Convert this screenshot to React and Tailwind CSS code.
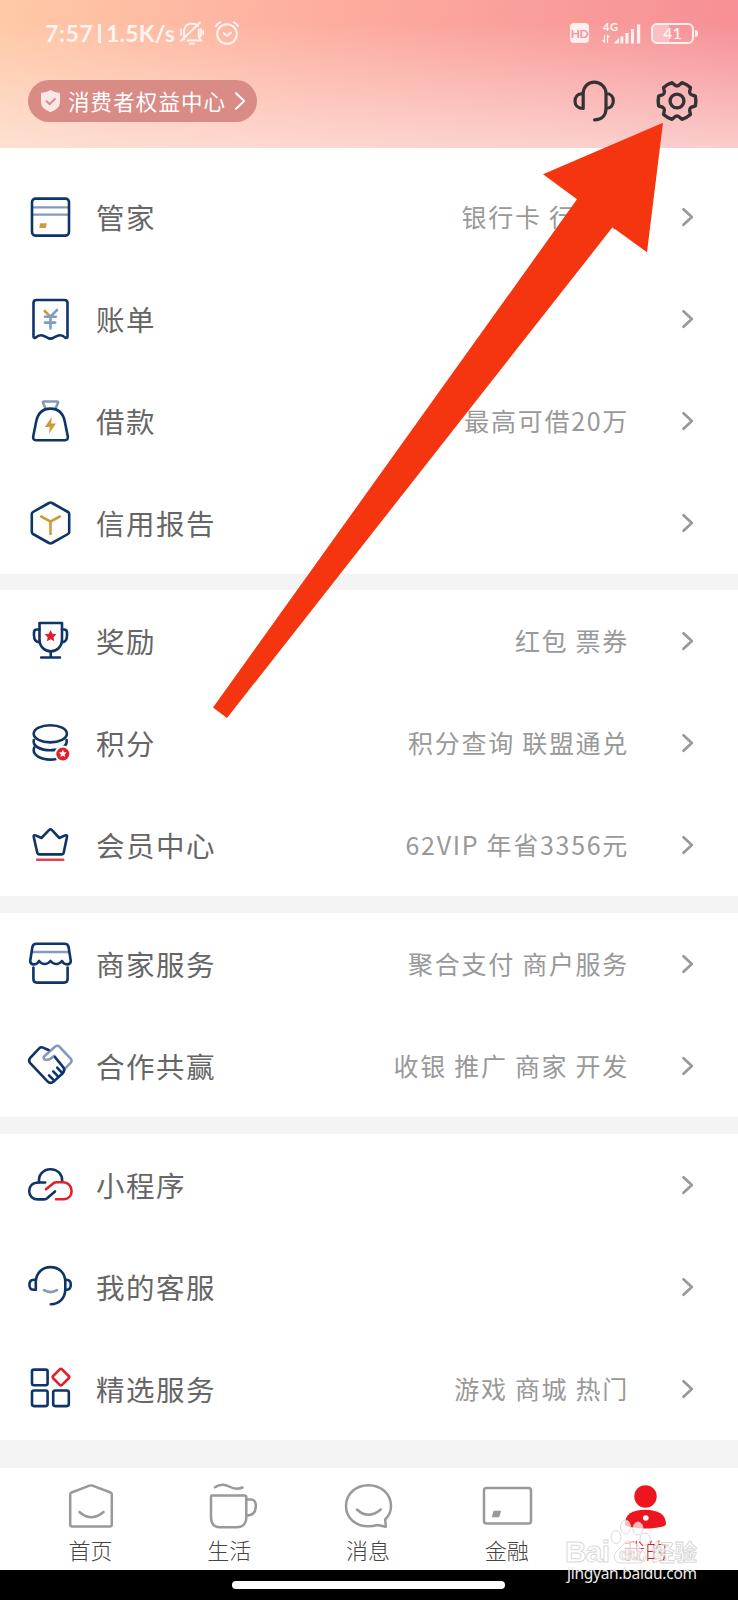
import React from "react";

const NAVY = "#0f3468";
const STEEL = "#8599bb";
const GOLD = "#cf9a3a";
const RED = "#e0202a";

function star(cx, cy, r) {
  return Array.from({ length: 10 }, (_, i) => {
    const rad = i % 2 ? r * 0.5 : r;
    const a = (Math.PI / 5) * i - Math.PI / 2;
    return `${(cx + rad * Math.cos(a)).toFixed(2)},${(cy + rad * Math.sin(a)).toFixed(2)}`;
  }).join(" ");
}

function gearPath() {
  const p = (r, deg) => {
    const a = (deg * Math.PI) / 180;
    return `${(r * Math.cos(a)).toFixed(2)} ${(r * Math.sin(a)).toFixed(2)}`;
  };
  let d = "";
  for (let k = 0; k < 6; k++) {
    const b = k * 60;
    d += `${k ? "L" : "M"}${p(19, b - 15)} Q${p(19.4, b)} ${p(19, b + 15)} L${p(17.4, b + 18.5)} Q${p(13, b + 30)} ${p(17.4, b + 41.5)} `;
  }
  return d + "Z";
}

const icons = {
  card: (
    <>
      <path d="M-18 -9.7H19M-18 -2.3H19" stroke={STEEL} strokeWidth="2.2" />
      <rect x="-18" y="-18.4" width="37" height="37" rx="3.5" />
      <path d="M-9.8 6.2H-3.2L-4.2 11H-10.8Z" fill={GOLD} stroke="none" />
    </>
  ),
  bill: (
    <>
      <path d="M-16.5 17.5V-16Q-16.5 -19 -13.5 -19H14.5Q17.5 -19 17.5 -16V17.5Q17.5 19.4 15.5 18.8Q12 15.5 8.5 16.5Q5 17.6 3.8 18.6Q0.5 20.6 -2.8 18.6Q-4 17.6 -7.5 16.5Q-11 15.5 -14.5 18.8Q-16.5 19.4 -16.5 17.5Z" />
      <path d="M-5.3 -8L0 -2.8" stroke={GOLD} />
      <path d="M7 -9L0.5 -2.4V9.5M-5 -2.2H5.8M-5 3.6H5.2" stroke="#7f9cc9" />
    </>
  ),
  bag: (
    <>
      <path d="M-4.5 -12.5L-7 -18.2Q-7.4 -19.5 -6 -19.5H7Q8.4 -19.5 8 -18.2L5.5 -12.5" stroke={STEEL} />
      <path d="M0.5 -12.4C10.5 -12.4 13.5 -6 14.8 .5L17.8 15.5Q18.3 19.3 15 19.3H-14Q-17.3 19.3 -16.8 15.5L-13.8 .5C-12.5 -6 -9.5 -12.4 .5 -12.4Z" />
      <path d="M1.8 -4L-5.2 6H-.2L-1 12.8L6 2.5H1.2Z" fill={GOLD} stroke="none" />
    </>
  ),
  report: (
    <>
      <path d="M-1 -20Q.5 -21 2 -20L18 -11Q19.2 -10.3 19.2 -9V9Q19.2 10.3 18 11L2 20Q.5 21 -1 20L-17 11Q-18.2 10.3 -18.2 9V-9Q-18.2 -10.3 -17 -11Z" />
      <path d="M-8.8 -6.5L.5 -1.3L9.8 -6.5M.5 -1.3V11" stroke={GOLD} />
    </>
  ),
  trophy: (
    <>
      <path d="M-10.5 -18H12V-1.5C12 6 6.5 10.3 .75 10.3S-10.5 6 -10.5 -1.5Z" />
      <path d="M-10.5 -11.5H-13Q-16 -11.5 -16 -8.5V-5.5Q-16 1 -10.5 1.2M12 -11.5H14Q17 -11.5 17 -8.5V-5.5Q17 1 12 1.2M.75 10.3V16.5M-8.8 16.5H10" />
      <polygon points={star(0.6, -4.8, 6.2)} fill={RED} stroke="none" />
    </>
  ),
  coins: (
    <>
      <ellipse cx=".3" cy="-9.2" rx="16.6" ry="8.6" />
      <path d="M-16.2 -3C-17.8 3.4 -9 7.2 .3 7.2C9.5 7.2 18 3.4 16.6 -3" />
      <path d="M-15.8 4.5C-18.6 12 -9 16.6 .3 16.6Q3.8 16.6 6 16" />
      <circle cx="12.8" cy="11" r="8.4" fill="#fff" stroke="none" />
      <circle cx="12.8" cy="11" r="6.5" fill={RED} stroke="none" />
      <polygon points={star(12.8, 10.8, 4)} fill="#fff" stroke="none" />
    </>
  ),
  crown: (
    <>
      <path d="M-12.6 8.2L-16.3 -8.2Q-16.6 -10.4 -14.4 -9.6L-8.6 -7L-1 -14.9Q.5 -16.3 2 -14.9L9.4 -7L15 -9.6Q17.4 -10.4 17 -8.2L13.6 8.2Q13.2 9.4 12 9.4H-11Q-12.2 9.4 -12.6 8.2Z" />
      <path d="M-12.8 14.8H13.2" stroke="#d94655" />
    </>
  ),
  shop: (
    <>
      <path d="M-17 -12H18" stroke={STEEL} />
      <path d="M-13.5 -20.2H14.5Q18 -20.2 18.6 -17L20.8 -3Q20.8 .4 17 .4Q13.5 .2 12 -3Q9.5 0 6.4 0Q3 0 .5 -3Q-2 0 -5.4 0Q-8.6 0 -11 -3Q-12.5 .2 -16 .4Q-19.8 .4 -19.8 -3L-17.6 -17Q-17 -20.2 -13.5 -20.2Z" />
      <path d="M-16.6 3.5V15Q-16.6 18.6 -13 18.6H14Q17.6 18.6 17.6 15V3.5" />
    </>
  ),
  shake: (
    <>
      <path d="M14.6 3.2L20.8 -3.4Q22.4 -5.5 20.6 -7.4L9.6 -19.2Q7.6 -21.2 5 -19.3L-6 -9.6Q-7 -7.4 -5 -6.5Q-1.8 -5.4 .8 -7.6L4.4 -10.2" stroke={STEEL} strokeWidth="2.6" />
      <path d="M-1.4 -16L-7.6 -18.6Q-9.3 -19.2 -10.8 -17.7L-20 -7.8Q-21.8 -5.5 -20 -3.1L-3 14.8Q.3 18.4 3.6 15.6L12.8 7.2Q15.2 4.4 13.6 1.6L5 -8.8" strokeWidth="2.6" />
      <path d="M-1 9.4L3.8 14.2M3.2 5.4L8 10.4M7.2 1.6L12 6.8" strokeWidth="2.6" />
    </>
  ),
  cloud: (
    <>
      <path d="M-10.8 -2.8C-12 -9.5 -7 -15.8 .5 -15.8C7.8 -15.8 12.3 -10.5 12.2 -4.2" />
      <path d="M-4.8 -2.5H-11.5C-17.5 -2.5 -20.8 1.2 -20.8 6.3C-20.8 11.2 -17 14.4 -12 14.4H-6Q-4 14.4 -2.6 13.1L5 6.4" />
      <path d="M-4 4.3L3.2 -1.6Q4.8 -2.8 6.8 -2.8H12.5C18.3 -2.8 21.6 1.2 21.6 6C21.6 10.8 18.4 14.2 13.6 14.2H6" stroke={RED} />
    </>
  ),
  service: (
    <>
      <path d="M-14.2 2.8V-6C-13.4 -15 -7 -19.9 .5 -19.9C9 -19.9 15.3 -14 15.3 -5V2C15.3 11.5 9 17 .8 17.2" />
      <path d="M-14.2 -7.2H-16Q-20.6 -7.2 -20.6 -2.2T-16 2.8H-14.2M15.3 -7.2H16.2Q20.8 -7.2 20.8 -2.2T16.2 2.8H15.3" />
      <path d="M-6 3.2Q.5 7 7 3.2" stroke={STEEL} />
    </>
  ),
  grid: (
    <>
      <rect x="-18" y="-19.4" width="15.6" height="15.6" rx="2" />
      <rect x="-18" y="1.5" width="15.6" height="15.6" rx="2" />
      <rect x="3.2" y="1.5" width="15.6" height="15.6" rx="2" />
      <rect x="4.6" y="-18.2" width="12.6" height="12.6" rx="1.6" transform="rotate(45 10.9 -11.9)" stroke={RED} />
    </>
  ),
};

const sections = [
  [
    ["card", "管家", "银行卡 行用卡"],
    ["bill", "账单", ""],
    ["bag", "借款", "最高可借20万"],
    ["report", "信用报告", ""],
  ],
  [
    ["trophy", "奖励", "红包 票券"],
    ["coins", "积分", "积分查询 联盟通兑"],
    ["crown", "会员中心", "62VIP 年省3356元"],
  ],
  [
    ["shop", "商家服务", "聚合支付 商户服务"],
    ["shake", "合作共赢", "收银 推广 商家 开发"],
  ],
  [
    ["cloud", "小程序", ""],
    ["service", "我的客服", ""],
    ["grid", "精选服务", "游戏 商城 热门"],
  ],
];

function Row({ icon, label, value }) {
  return (
    <div className="flex h-[102px] items-center pl-[26px] pr-[43px]">
      <svg className="h-12 w-12 shrink-0" viewBox="-24 -24 48 48" fill="none" stroke={NAVY} strokeWidth="2.6" strokeLinecap="round" strokeLinejoin="round">
        {icons[icon]}
      </svg>
      <span className="ml-[22px] text-[28.5px] leading-10 tracking-[1.5px] text-[#666]">{label}</span>
      <span className="ml-auto whitespace-pre pb-[2px] text-[25px] leading-9 tracking-[1.7px] text-[#999]">{value}</span>
      <svg className="ml-[52px] h-6 w-[14px] shrink-0" viewBox="0 0 14 24" fill="none" stroke="#999" strokeWidth="2.7" strokeLinecap="round" strokeLinejoin="round">
        <path d="M2.5 4.2L10.8 12L2.5 19.8" />
      </svg>
    </div>
  );
}

function StatusBar() {
  return (
    <div className="flex h-[66px] items-center pl-[45px] pr-[40px] text-[#fff4ef]">
      <div className="flex w-[130px] items-center justify-between font-['Lato'] text-[23px] font-bold leading-7">
        <span className="tracking-[0.6px]">7:57</span>
        <span className="h-[19px] w-[3px] bg-[#fff4ef]" />
        <span className="tracking-[0.2px]">1.5K/s</span>
      </div>
      <svg className="ml-[4px] h-[26px] w-[26px]" viewBox="0 0 26 26" fill="none" stroke="currentColor" strokeWidth="1.9" strokeLinecap="round">
        <path d="M5 19.5V11C5 6.5 8.5 3.5 13 3.5C15.5 3.5 17.5 4.3 19 6M8.5 20.5H22L19.8 17V9.5M2 21L21 2.5M10.5 23.6H15M22 9V16M24.2 11V14M2 9.5V15" />
      </svg>
      <svg className="ml-[9px] h-[26px] w-[26px]" viewBox="0 0 26 26" fill="none" stroke="currentColor" strokeWidth="2" strokeLinecap="round" strokeLinejoin="round">
        <circle cx="13" cy="14" r="9.8" />
        <path d="M9.5 13L13 16L17 12.5M2 6Q3.5 3.5 6 2.3M24 6Q22.5 3.5 20 2.3" />
      </svg>
      <span className="ml-auto flex h-5 w-[19px] items-center justify-center rounded-[4px] bg-[#fff0ee] pt-px font-['Lato'] text-[12px] font-bold leading-none tracking-[-0.4px] text-[#f3959a]">HD</span>
      <svg className="ml-[12px] h-6 w-[40px]" viewBox="0 0 40 24" fill="currentColor">
        <text x="2" y="9.5" fontFamily="Lato" fontSize="11" fontWeight="700" letterSpacing=".5">4G</text>
        <path d="M12.5 22.5L18 17V22.5ZM19.5 15.5H22.3V22.5H19.5ZM24.5 12H27.5V22.5H24.5ZM30 8H33V22.5H30ZM36 3.5H39.2V22.5H36Z" />
        <path d="M3.5 14V21L1.5 19M6.5 22V14.5L8.5 16.5" fill="none" stroke="currentColor" strokeWidth="1.2" />
      </svg>
      <div className="ml-[10px] flex items-center">
        <span className="flex h-[21px] w-[43px] items-center justify-center rounded-[6px] border-2 border-[#fff0ee] bg-gradient-to-r from-[#fabfc0] from-40% to-transparent to-40% font-['Lato'] text-[16px] leading-none text-white">41</span>
        <span className="ml-px h-[7px] w-[3px] rounded-r bg-[#fff0ee]" />
      </div>
    </div>
  );
}

function Header() {
  return (
    <header className="h-[148px] bg-[linear-gradient(to_bottom,rgba(253,238,234,0)_15%,rgba(253,238,234,0.65)_100%),linear-gradient(98deg,#ffc9a6_0%,#fdac9f_45%,#f68e95_100%)]">
      <StatusBar />
      <div className="flex items-center pl-7 pr-[39px] pt-[13px]">
        <div className="flex h-[42px] w-[229px] items-center rounded-full bg-[#d98b86] pl-[12px] text-white">
          <svg className="h-6 w-[21px]" viewBox="0 0 21 24">
            <path d="M10.5 1Q15 3.8 20 4V13.5Q19.5 20 10.5 23.2Q1.5 20 1 13.5V4Q6 3.8 10.5 1Z" fill="#fbe6e6" />
            <path d="M6 11.8L9.7 15.2L15.5 9.4" fill="none" stroke="#d98b86" strokeWidth="2" />
          </svg>
          <span className="ml-[7px] pb-px text-[21.5px] leading-8 tracking-[1.1px]">消费者权益中心</span>
          <svg className="ml-[8px] h-5 w-3" viewBox="0 0 12 20" fill="none" stroke="currentColor" strokeWidth="2" strokeLinecap="round" strokeLinejoin="round">
            <path d="M2 2.2L10.2 10L2 17.8" />
          </svg>
        </div>
        <svg className="ml-auto h-11 w-11" viewBox="-22 -22 44 44" fill="none" stroke="#333" strokeWidth="3.2" strokeLinecap="round" strokeLinejoin="round">
          <path d="M-10.8 7.5V-7.5C-10.8 -14 -6 -18.8 .2 -18.8S12 -14 12 -7.5V7.5C12 14.5 7.5 18.8 .5 18.8M-10.8 -7.5C-16.5 -7.5 -19 -4 -19 .2S-16 7.5 -10.8 7.5M12 -7.5C17 -7.5 19.3 -4 19.3 0S17 7.3 12 7.5" />
        </svg>
        <svg className="ml-[39px] h-11 w-11" viewBox="-22 -22 44 44" fill="none" stroke="#333" strokeWidth="3.4" strokeLinejoin="round">
          <path d={gearPath()} />
          <circle r="6.9" />
        </svg>
      </div>
    </header>
  );
}

const tabs = [
  ["首页", <path key="i" d="M-20.8 -11.5Q-20.8 -13 -19.5 -13.5L-1.5 -20.3Q0 -20.9 1.5 -20.3L19.5 -13.5Q20.8 -13 20.8 -11.5V18.5Q20.8 20.5 18.8 20.5H-18.8Q-20.8 20.5 -20.8 18.5ZM-11.5 6Q0 16.5 12.5 6" />],
  ["生活", <path key="i" d="M-17.2 -10.5H15.5Q17.3 -10.5 17.3 -8.7V11C17.3 17.5 13.5 21.2 8 21.2H-9C-14.8 21.2 -18 17.5 -18 11V-8.7Q-18 -10.5 -17.2 -10.5ZM17.8 -6.5H22Q26.8 -6.5 26.8 0Q26.8 9.5 17.8 9.5M-14 -18.8Q-7 -23.5 0 -19.5T13.5 -18.5" />],
  ["消息", <path key="i" d="M17.8 20.8L17.2 13.5C21 9.8 23 5.5 23 0C23 -12.2 13 -20.8 .5 -20.8S-22 -12.2 -22 0S-12 20.3 0 20.3Q5 20.3 9.5 19ZM-11 3.5Q0 14 12.8 3.5" />],
  ["金融", <g key="i"><rect x="-23" y="-18" width="47" height="35.5" rx="2.5" /><path d="M-13.3 4.8H-5.8L-7.8 11.2H-15.3Z" fill="#999" stroke="none" /></g>],
  ["我的", <g key="i" fill="#ed151f" stroke="none"><circle cx=".5" cy="-9.5" r="11.2" /><path d="M-20 18C-20 8.5 -13 3.7 0 3.7S21 8.5 21 18C21 20.8 10 22.5 .5 22.5S-20 20.8 -20 18Z" /><circle cx=".8" cy="12" r="2.8" fill="#fff" /></g>],
];

function TabBar() {
  return (
    <nav className="flex h-[102px] justify-center bg-white pr-[2px] pt-[10px]">
      {tabs.map(([name, art], i) => (
        <div key={name} className={"flex w-[138.7px] flex-col items-center " + (i === 4 ? "text-[#cf1f28]" : "text-[#444]")}>
          <svg className="h-14 w-14" viewBox="-28 -28 56 56" fill="none" stroke="#999" strokeWidth="2.5" strokeLinecap="round" strokeLinejoin="round">
            {art}
          </svg>
          <span className="text-[22px] font-light leading-[30px]">{name}</span>
        </div>
      ))}
    </nav>
  );
}

function Watermark() {
  return (
    <svg className="absolute bottom-0 right-0 h-[90px] w-[190px]" viewBox="548 1510 190 90">
      <g fill="#fff" fillOpacity=".7" stroke="#cfcfcf" strokeOpacity=".8" strokeWidth="1">
        <ellipse cx="616" cy="1537" rx="5" ry="6.5" />
        <ellipse cx="625.5" cy="1527" rx="5" ry="7" />
        <ellipse cx="638" cy="1528.5" rx="5" ry="6.5" />
        <ellipse cx="645" cy="1539" rx="5" ry="6" />
        <path d="M630 1541C636 1541 639 1548 644 1552C648 1557 645 1563 639 1563H621C614 1563 612 1556 617 1551C622 1547 624 1541 630 1541Z" />
        <text x="565" y="1562" fontFamily="Liberation Sans" fontWeight="700" fontSize="30" textLength="45">Bai</text>
        <text x="619" y="1560" fontFamily="Liberation Sans" fontWeight="700" fontSize="17" textLength="22">du</text>
        <text x="652" y="1561" fontFamily="Noto Sans CJK SC" fontWeight="700" fontSize="22.5">经验</text>
      </g>
      <text x="567" y="1579" fill="#eee" fontFamily="Noto Sans" fontSize="15.5" textLength="130">jingyan.baidu.com</text>
    </svg>
  );
}

export default function App() {
  return (
    <div className="relative h-[1600px] w-[738px] overflow-hidden bg-white font-['Noto_Sans_CJK_SC',sans-serif]">
      <Header />
      <main className="flex flex-col gap-[16.6px] bg-[#f4f4f4] pb-[28.4px]">
        {sections.map((rows, i) => (
          <section key={i} className={i === 0 ? "bg-white pt-[17.8px]" : "bg-white"}>
            {rows.map(([icon, label, value]) => (
              <Row key={label} icon={icon} label={label} value={value} />
            ))}
          </section>
        ))}
      </main>
      <TabBar />
      <footer className="flex h-[30px] justify-center bg-black pr-px pt-[11px]">
        <div className="h-2 w-[273px] rounded-full bg-white" />
      </footer>
      <svg className="absolute left-[210px] top-[120px] h-[602px] w-[456px]" viewBox="210 120 456 602">
        <polygon points="663,122.7 543,174.3 577,199.3 213,707.5 227,718 612.5,227.3 647,252.3" fill="#f53510" />
      </svg>
      <Watermark />
    </div>
  );
}
